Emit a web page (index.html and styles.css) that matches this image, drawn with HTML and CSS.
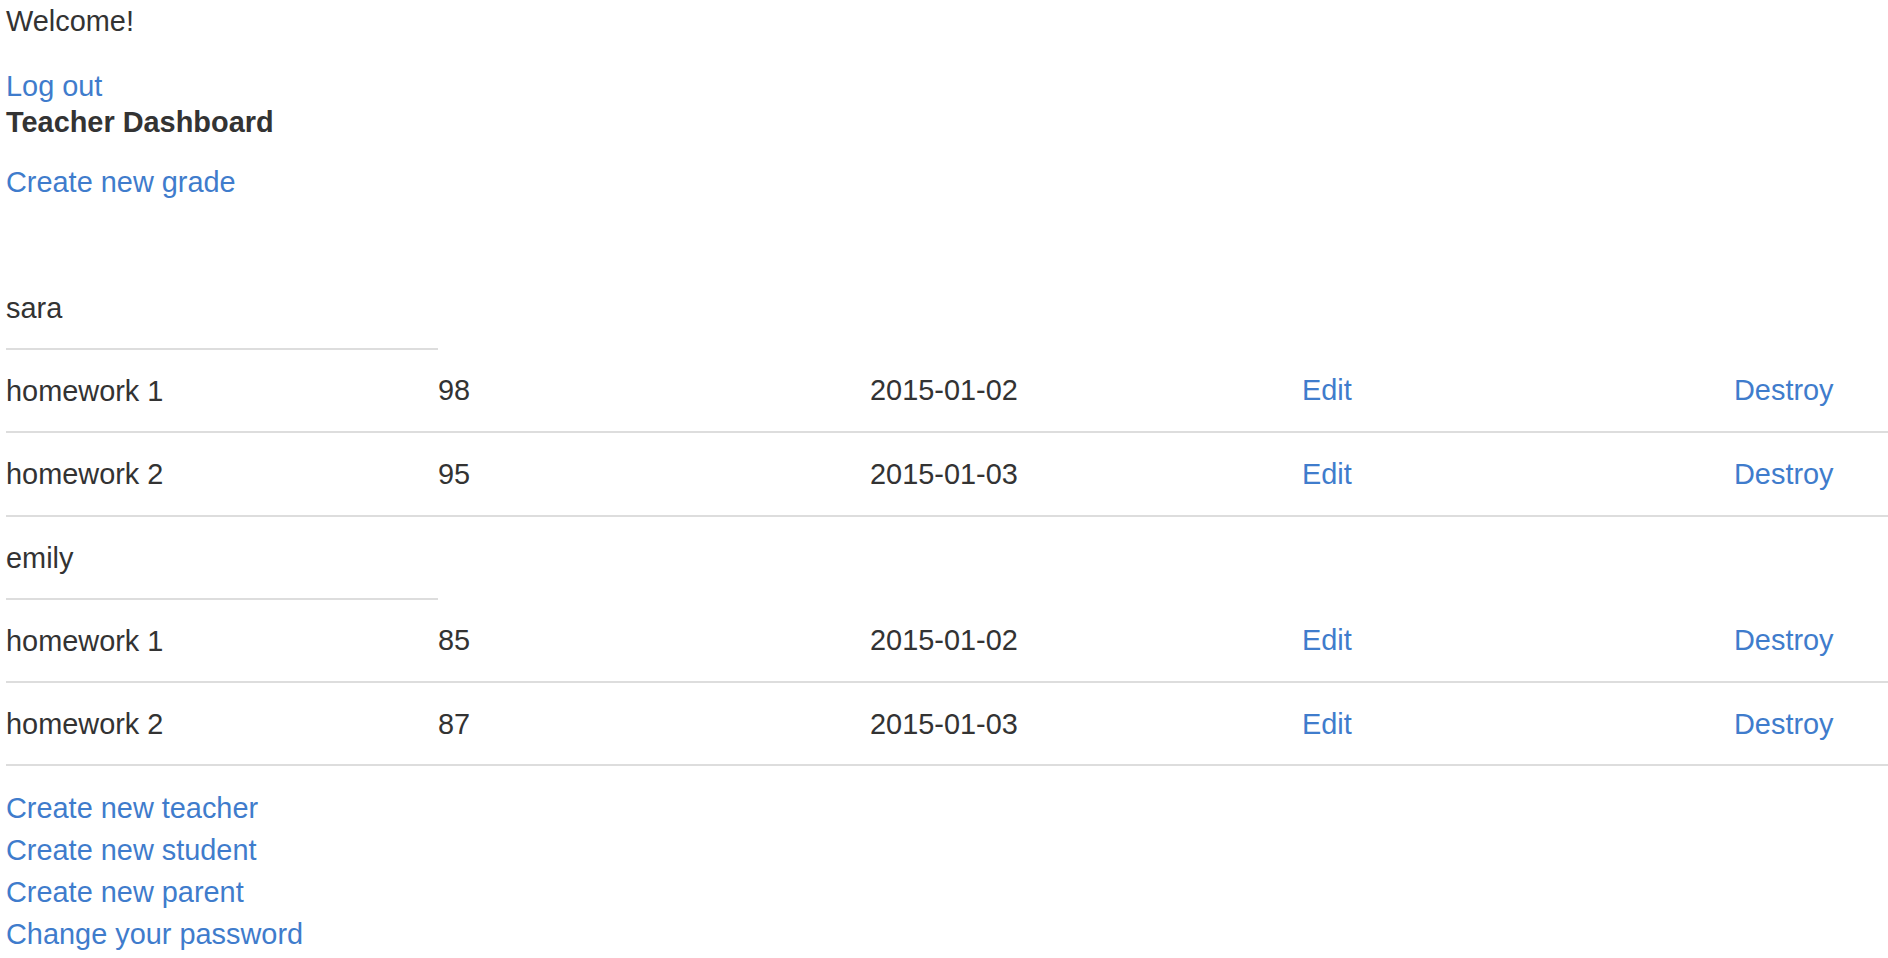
FILE: index.html
```html
<!DOCTYPE html>
<html>
<head>
<meta charset="utf-8">
<title>Teacher Dashboard</title>
<link rel="stylesheet" href="styles.css">
</head>
<body>
<div class="page">
  <p class="welcome">Welcome!</p>
  <div class="line"><a href="#">Log out</a></div>
  <div class="title">Teacher Dashboard</div>
  <p class="create-grade"><a href="#">Create new grade</a></p>

  <div class="table-wrap">
    <table class="grades">
      <colgroup>
        <col class="c"><col class="c"><col class="c"><col class="c"><col class="c">
      </colgroup>
      <tbody>
        <tr class="student"><th>sara</th></tr>
        <tr><td>homework 1</td><td>98</td><td>2015-01-02</td><td><a href="#">Edit</a></td><td><a href="#">Destroy</a></td></tr>
        <tr><td>homework 2</td><td>95</td><td>2015-01-03</td><td><a href="#">Edit</a></td><td><a href="#">Destroy</a></td></tr>
        <tr class="student"><th>emily</th></tr>
        <tr><td>homework 1</td><td>85</td><td>2015-01-02</td><td><a href="#">Edit</a></td><td><a href="#">Destroy</a></td></tr>
        <tr><td>homework 2</td><td>87</td><td>2015-01-03</td><td><a href="#">Edit</a></td><td><a href="#">Destroy</a></td></tr>
      </tbody>
    </table>
  </div>

  <div class="links">
    <a href="#">Create new teacher</a>
    <a href="#">Create new student</a>
    <a href="#">Create new parent</a>
    <a href="#">Change your password</a>
  </div>
</div>
</body>
</html>
```

FILE: styles.css
```css
html, body {
  margin: 0;
  padding: 0;
  background: #ffffff;
  overflow-x: hidden;
}

body {
  font-family: "Liberation Sans", Arial, Helvetica, sans-serif;
  font-size: 28.9px;
  line-height: 42px;
  color: #333333;
}

a {
  color: #3f7ccc;
  text-decoration: none;
}

.page {
  padding-left: 6px;
}

.welcome {
  margin: 0 0 23px 0;
}

.line {
  line-height: 42px;
}

.title {
  font-weight: bold;
  line-height: 30px;
}

.create-grade {
  margin: 24px 0 64px 0;
}

.table-wrap {
  overflow: hidden;
}

.grades {
  border-collapse: collapse;
  table-layout: fixed;
  width: 2160px;
}

.grades .c {
  width: 432px;
}

.grades th,
.grades td {
  padding: 20px 0 19.2px 0;
  text-align: left;
  vertical-align: top;
  font-weight: normal;
  border-bottom: 2px solid #dddddd;
}

.links {
  margin-top: 21px;
  display: flex;
  flex-direction: column;
  align-items: flex-start;
}
```
